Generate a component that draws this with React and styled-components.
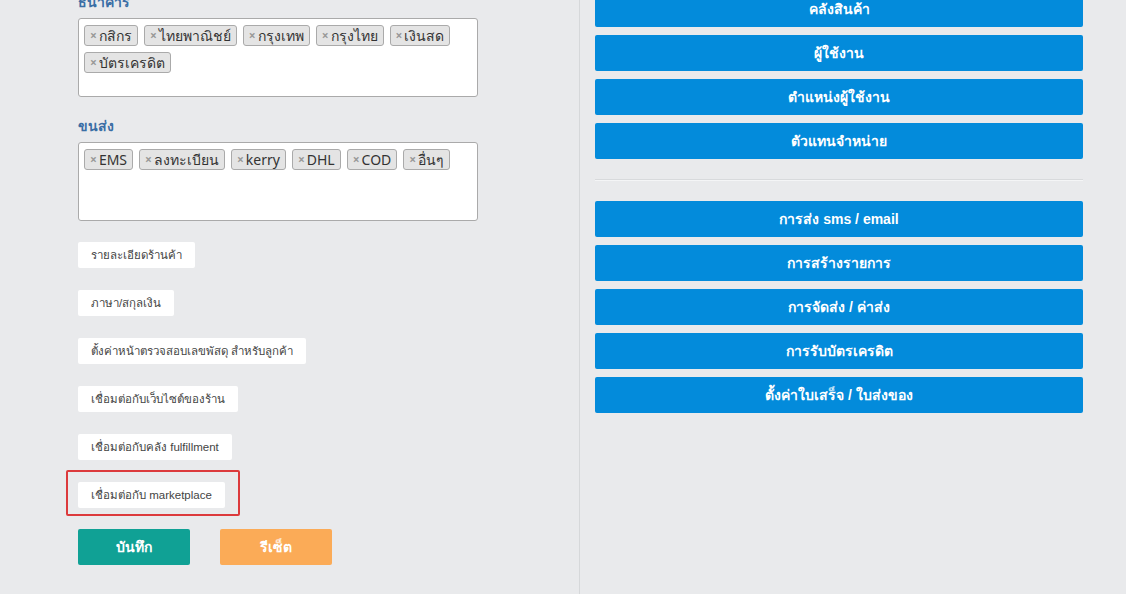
import React from 'react';
import styled, { createGlobalStyle } from 'styled-components';

const GlobalStyle = createGlobalStyle`
  html, body {
    margin: 0;
    padding: 0;
    background: #e9eaec;
    overflow: hidden;
  }
  body {
    font-family: 'Liberation Sans', 'Noto Sans', sans-serif;
  }
`;

const Page = styled.div`
  display: flex;
  width: 1126px;
  height: 594px;
  overflow: hidden;
  background: #e9eaec;
`;

const LeftColumn = styled.div`
  width: 501px;
  padding-left: 78px;
  border-right: 1px solid #d6d8da;
  display: flex;
  flex-direction: column;
  margin-top: -8px;
`;

const RightColumn = styled.div`
  flex: 1;
  padding: 0 43px 0 15px;
  display: flex;
  flex-direction: column;
  gap: 8px;
  margin-top: -9px;
`;

const FieldLabel = styled.div`
  width: 400px;
  font-family: 'Noto Sans', sans-serif;
  font-size: 14px;
  font-weight: bold;
  color: #3a6ea5;
  line-height: 20px;
  margin-bottom: 6px;
  margin-top: ${(p) => p.$top || 0}px;
`;

const TagBox = styled.div`
  width: 400px;
  height: 79px;
  box-sizing: border-box;
  background: #ffffff;
  border: 1px solid #aaaaaa;
  border-radius: 3px;
  padding: 6px 5px;
  display: flex;
  flex-wrap: wrap;
  align-content: flex-start;
  gap: 6px;
`;

const Tag = styled.span`
  display: inline-flex;
  align-items: center;
  height: 21px;
  box-sizing: border-box;
  padding: 0 5px;
  background: #e4e4e4;
  border: 1px solid #aaaaaa;
  border-radius: 3px;
  font-family: 'Noto Sans', sans-serif;
  font-size: 14px;
  color: #333333;
`;

const TagRemove = styled.span`
  color: #999999;
  font-size: 12px;
  font-weight: bold;
  margin-right: 2px;
`;

const SettingList = styled.div`
  display: flex;
  flex-direction: column;
  align-items: flex-start;
  gap: 22px;
  margin-top: 21px;
`;

const SettingButton = styled.button`
  height: 26px;
  padding: 0 13px;
  background: #ffffff;
  border: none;
  border-radius: 2px;
  font-family: 'Liberation Sans', sans-serif;
  font-size: 11.5px;
  color: #444444;
  cursor: pointer;
`;

const Highlight = styled.div`
  display: flex;
  margin-left: -12px;
  margin-top: -12px;
  padding: 10px 13px 6px 10px;
  border: 2px solid #dc3a3c;
  border-radius: 2px;
`;

const ActionRow = styled.div`
  display: flex;
  gap: 30px;
  margin-top: 13px;
`;

const ActionButton = styled.button`
  width: 112px;
  height: 36px;
  border: none;
  border-radius: 2px;
  background: ${(p) => p.$color};
  color: #ffffff;
  font-family: 'Liberation Sans', sans-serif;
  font-size: 14px;
  font-weight: bold;
`;

const MenuButton = styled.button`
  width: 488px;
  height: 36px;
  border: none;
  border-radius: 2px;
  background: #038bdb;
  color: #ffffff;
  font-family: 'Liberation Sans', sans-serif;
  font-size: 14px;
  font-weight: bold;
`;

const Divider = styled.div`
  width: 488px;
  height: 1px;
  background: #d8dadc;
  border-bottom: 1px solid #f4f5f6;
  margin: 12px 0 12px;
`;

const banks = ['กสิกร', 'ไทยพาณิชย์', 'กรุงเทพ', 'กรุงไทย', 'เงินสด', 'บัตรเครดิต'];
const shipping = ['EMS', 'ลงทะเบียน', 'kerry', 'DHL', 'COD', 'อื่นๆ'];
const settings = [
  'รายละเอียดร้านค้า',
  'ภาษา/สกุลเงิน',
  'ตั้งค่าหน้าตรวจสอบเลขพัสดุ สำหรับลูกค้า',
  'เชื่อมต่อกับเว็บไซต์ของร้าน',
  'เชื่อมต่อกับคลัง fulfillment',
];
const menuTop = ['คลังสินค้า', 'ผู้ใช้งาน', 'ตำแหน่งผู้ใช้งาน', 'ตัวแทนจำหน่าย'];
const menuBottom = [
  'การส่ง sms / email',
  'การสร้างรายการ',
  'การจัดส่ง / ค่าส่ง',
  'การรับบัตรเครดิต',
  'ตั้งค่าใบเสร็จ / ใบส่งของ',
];

const TagInput = ({ items }) => (
  <TagBox>
    {items.map((t) => (
      <Tag key={t}>
        <TagRemove>×</TagRemove>
        {t}
      </Tag>
    ))}
  </TagBox>
);

export default function App() {
  return (
    <>
      <GlobalStyle />
      <Page>
        <LeftColumn>
          <FieldLabel>ธนาคาร</FieldLabel>
          <TagInput items={banks} />
          <FieldLabel $top={19}>ขนส่ง</FieldLabel>
          <TagInput items={shipping} />
          <SettingList>
            {settings.map((s) => (
              <SettingButton key={s}>{s}</SettingButton>
            ))}
            <Highlight>
              <SettingButton>เชื่อมต่อกับ marketplace</SettingButton>
            </Highlight>
          </SettingList>
          <ActionRow>
            <ActionButton $color="#10a195">บันทึก</ActionButton>
            <ActionButton $color="#fbab57">รีเซ็ต</ActionButton>
          </ActionRow>
        </LeftColumn>
        <RightColumn>
          {menuTop.map((m) => (
            <MenuButton key={m}>{m}</MenuButton>
          ))}
          <Divider />
          {menuBottom.map((m) => (
            <MenuButton key={m}>{m}</MenuButton>
          ))}
        </RightColumn>
      </Page>
    </>
  );
}
